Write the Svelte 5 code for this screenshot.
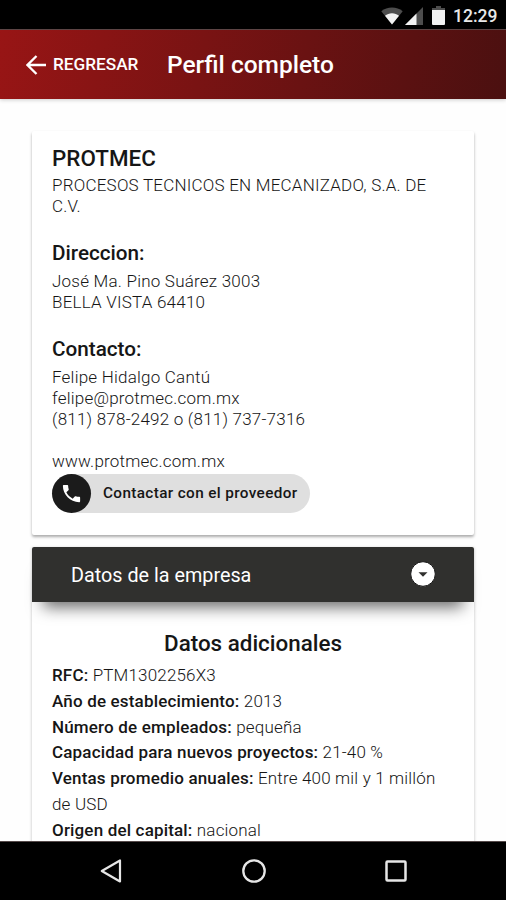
<script lang="ts">
  let expanded = $state(true);

  const company = {
    name: "PROTMEC",
    legal: "PROCESOS TECNICOS EN MECANIZADO, S.A. DE C.V.",
    address: ["José Ma. Pino Suárez 3003", "BELLA VISTA 64410"],
    contact: ["Felipe Hidalgo Cantú", "felipe@protmec.com.mx", "(811) 878-2492 o (811) 737-7316"],
    web: "www.protmec.com.mx"
  };

  const details = [
    ["RFC", "PTM1302256X3"],
    ["Año de establecimiento", "2013"],
    ["Número de empleados", "pequeña"],
    ["Capacidad para nuevos proyectos", "21-40 %"],
    ["Ventas promedio anuales", "Entre 400 mil y 1 millón de USD"],
    ["Origen del capital", "nacional"]
  ];
</script>

<div class="screen">
  <div class="status">
    <svg class="wifi" width="22" height="18" viewBox="0 0 22 18">
      <path d="M11 17.5 0.3 4.2C3.3 1.8 7 .5 11 .5s7.7 1.3 10.7 3.7z" fill="#4d4d4d" />
      <path d="M11 17.5 4 8.7c2-1.6 4.400-2.500 7-2.500s5 .9 7 2.500z" fill="#f2f2f2" />
    </svg>
    <svg class="signal" width="18" height="18" viewBox="0 0 18 18">
      <path d="M0 18 18 0v18z" fill="#4d4d4d" />
      <path d="M0 18 11.500 6.500V18z" fill="#f2f2f2" />
    </svg>
    <svg class="battery" width="13" height="19" viewBox="0 0 13 19">
      <path d="M4 0h5v2h4v3H0V2h4z" fill="#4d4d4d" />
      <path d="M0 4h13v14a1 1 0 0 1-1 1H1a1 1 0 0 1-1-1z" fill="#f2f2f2" />
    </svg>
    <span class="clock">12:29</span>
  </div>

  <header>
    <button class="back">
      <svg width="20" height="20" viewBox="0 0 20 20">
        <path d="M20 10H2M10.500 1 1.500 10l9 9" fill="none" stroke="#fff" stroke-width="2.300" />
      </svg>
      <span>REGRESAR</span>
    </button>
    <h1>Perfil completo</h1>
  </header>

  <main>
    <section class="card">
      <h2>{company.name}</h2>
      <p class="legal">{company.legal}</p>
      <h3>Direccion:</h3>
      {#each company.address as line}
        <p>{line}</p>
      {/each}
      <h3>Contacto:</h3>
      {#each company.contact as line}
        <p>{line}</p>
      {/each}
      <p class="web">{company.web}</p>
      <button class="chip">
        <span class="chip-icon">
          <svg width="23" height="23" viewBox="0 0 24 24">
            <path fill="#fff" d="M6.620 10.790c1.440 2.830 3.760 5.140 6.590 6.590l2.200-2.200c.27-.27.67-.36 1.020-.24 1.120.37 2.330.57 3.570.57.55 0 1 .45 1 1V20c0 .55-.45 1-1 1-9.390 0-17-7.610-17-17 0-.55.45-1 1-1h3.500c.55 0 1 .45 1 1 0 1.250.2 2.450.57 3.570.11.35.03.74-.25 1.020l-2.200 2.200z" />
          </svg>
        </span>
        <span class="chip-text">Contactar con el proveedor</span>
      </button>
    </section>

    <section class="panel">
      <button class="panel-head" onclick={() => (expanded = !expanded)}>
        <span>Datos de la empresa</span>
        <svg width="26" height="26" viewBox="0 0 26 26">
          <circle cx="13" cy="13" r="12.300" fill="#fff" stroke="#151515" stroke-width="1" />
          <path d="M8.500 11.300h9L13 15.800z" fill="#30302e" />
        </svg>
      </button>
      {#if expanded}
        <div class="panel-body">
          <h2>Datos adicionales</h2>
          {#each details as [label, value]}
            <p><b>{label}:</b> {value}</p>
          {/each}
        </div>
      {/if}
    </section>
  </main>

  <nav>
    <svg width="22" height="24" viewBox="0 0 22 24">
      <path d="M20 1.500v21L1.800 12z" fill="none" stroke="#e6e6e6" stroke-width="2.200" stroke-linejoin="round" />
    </svg>
    <svg width="24" height="24" viewBox="0 0 24 24">
      <circle cx="12" cy="12" r="10.700" fill="none" stroke="#e6e6e6" stroke-width="2.300" />
    </svg>
    <svg width="22" height="22" viewBox="0 0 22 22">
      <rect x="1.500" y="1.500" width="19" height="19" rx="1" fill="none" stroke="#e6e6e6" stroke-width="2.500" />
    </svg>
  </nav>
</div>

<style>
  :global(body) {
    margin: 0;
    background: #fff;
  }
  .screen {
    display: flex;
    flex-direction: column;
    width: 506px;
    height: 900px;
    overflow: hidden;
    background: #fefefe;
    font-family: Roboto, sans-serif;
    color: #161616;
  }
  button {
    border: 0;
    padding: 0;
    background: none;
    font: inherit;
    color: inherit;
    cursor: pointer;
  }
  h1,
  h2,
  h3,
  p {
    margin: 0;
  }
  .status {
    flex: none;
    display: flex;
    align-items: center;
    justify-content: flex-end;
    box-sizing: border-box;
    height: 29px;
    padding: 2px 9px 0 0;
    background: #000;
    color: #e8e8e8;
  }
  .signal {
    margin-left: 2px;
  }
  .battery {
    margin-left: 9px;
  }
  .clock {
    width: 44px;
    margin-left: 8px;
    font-size: 17.5px;
    font-weight: 500;
    white-space: nowrap;
  }
  header {
    flex: none;
    display: flex;
    align-items: center;
    box-sizing: border-box;
    height: 70px;
    padding-left: 26px;
    border-top: 1px solid #5d4444;
    background: linear-gradient(100deg, #981515 0%, #4b1010 100%);
    box-shadow: 0 1px 4px rgba(0, 0, 0, 0.2);
    color: #fff;
  }
  .back {
    display: flex;
    align-items: center;
    gap: 7px;
    width: 141px;
    font-size: 17.2px;
    font-weight: 500;
  }
  .back span {
    padding-bottom: 2px;
  }
  h1 {
    font-size: 24.5px;
    font-weight: 500;
  }
  main {
    flex: 1;
    min-height: 0;
    overflow: hidden;
    padding: 32px 32px 0;
  }
  .card {
    box-sizing: border-box;
    height: 404px;
    padding: 14px 20px 0;
    border-radius: 2px;
    background: #fff;
    box-shadow: 0 2px 3px rgba(0, 0, 0, 0.33);
  }
  h2 {
    font-size: 22.4px;
    font-weight: 500;
    line-height: 26px;
  }
  h3 {
    margin: 23px 0 5px;
    font-size: 20.7px;
    font-weight: 500;
    line-height: 26px;
  }
  p {
    font-size: 17px;
    font-weight: 300;
    line-height: 21px;
    letter-spacing: 0.22px;
  }
  .legal {
    width: 385px;
    margin-top: 4px;
  }
  .web {
    margin-top: 21px;
  }
  .chip {
    display: flex;
    align-items: center;
    width: 258px;
    height: 39px;
    margin-top: 2px;
    border-radius: 20px;
    background: #dfdfdf;
  }
  .chip-icon {
    display: flex;
    align-items: center;
    justify-content: center;
    width: 39px;
    height: 39px;
    border-radius: 50%;
    background: #1b1b1b;
  }
  .chip-text {
    margin-left: 12px;
    padding-bottom: 2px;
    font-size: 15.3px;
    font-weight: 500;
    letter-spacing: 0.37px;
    white-space: nowrap;
  }
  .panel {
    margin-top: 12px;
    background: #fff;
    box-shadow: 0 1px 3px rgba(0, 0, 0, 0.25);
  }
  .panel-head {
    display: flex;
    align-items: center;
    justify-content: space-between;
    box-sizing: border-box;
    width: 100%;
    height: 55px;
    padding: 0 38px 2px 39px;
    border-radius: 2px 2px 0 0;
    background: #30302e;
    box-shadow: 0 16px 16px -11px rgba(0, 0, 0, 0.6);
    color: #fff;
    font-size: 19.8px;
  }
  .panel-head span {
    padding-top: 4px;
  }
  .panel-body {
    padding: 28px 20px 0;
  }
  .panel-body h2 {
    margin-bottom: 7px;
    text-align: center;
  }
  .panel-body p {
    max-width: 392px;
    line-height: 25.8px;
    letter-spacing: 0.17px;
  }
  b {
    font-weight: 500;
  }
  nav {
    flex: none;
    display: flex;
    align-items: center;
    justify-content: space-between;
    box-sizing: border-box;
    height: 59px;
    padding: 0 99px 0 100px;
    border-top: 1px solid #554a4a;
    background: #000;
  }
</style>
